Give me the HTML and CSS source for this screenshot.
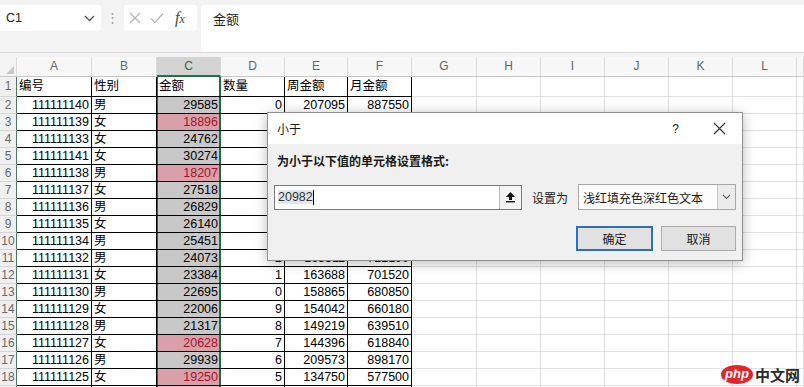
FILE: index.html
```html
<!DOCTYPE html>
<html>
<head>
<meta charset="utf-8">
<link rel="stylesheet" href="styles.css">
</head>
<body>
<div class="top">
  <div class="namebox"><span>C1</span><svg width="11" height="7" viewBox="0 0 11 7"><path d="M1 1l4.5 4.5L10 1" stroke="#555" stroke-width="1.3" fill="none"/></svg></div>
  <div class="dots">⋮</div>
  <div class="fxbox">
    <svg width="12" height="12" viewBox="0 0 12 12"><path d="M1 1l10 10M11 1L1 11" stroke="#b4b4b4" stroke-width="1.2"/></svg>
    <svg width="14" height="12" viewBox="0 0 14 12"><path d="M1 6.5l4 4L13 1.5" stroke="#b4b4b4" stroke-width="1.2" fill="none"/></svg>
    <span class="fx">f<small>x</small></span>
  </div>
  <div class="formula">金额</div>
</div>
<div class="gap"></div>

<div class="sheet">
  <div class="row hd"><b class="corner"></b><b>A</b><b>B</b><b class="ch">C</b><b>D</b><b>E</b><b>F</b><b>G</b><b>H</b><b>I</b><b>J</b><b>K</b><b>L</b><b></b></div>
  <div class="row d first"><b>1</b><span>编号</span><span>性别</span><span class="c">金额</span><span>数量</span><span>周金额</span><span>月金额</span><i></i><i></i><i></i><i></i><i></i><i></i><i></i></div>
  <div class="row d"><b>2</b><span class="n">111111140</span><span>男</span><span class="c n g">29585</span><span class="n">0</span><span class="n">207095</span><span class="n">887550</span><i></i><i></i><i></i><i></i><i></i><i></i><i></i></div>
  <div class="row d"><b>3</b><span class="n">111111139</span><span>女</span><span class="c n p">18896</span><span class="n">0</span><span class="n">132272</span><span class="n">566880</span><i></i><i></i><i></i><i></i><i></i><i></i><i></i></div>
  <div class="row d"><b>4</b><span class="n">111111133</span><span>女</span><span class="c n g">24762</span><span class="n">9</span><span class="n">173334</span><span class="n">742860</span><i></i><i></i><i></i><i></i><i></i><i></i><i></i></div>
  <div class="row d"><b>5</b><span class="n">111111141</span><span>女</span><span class="c n g">30274</span><span class="n">8</span><span class="n">211918</span><span class="n">908220</span><i></i><i></i><i></i><i></i><i></i><i></i><i></i></div>
  <div class="row d"><b>6</b><span class="n">111111138</span><span>男</span><span class="c n p">18207</span><span class="n">7</span><span class="n">127449</span><span class="n">546210</span><i></i><i></i><i></i><i></i><i></i><i></i><i></i></div>
  <div class="row d"><b>7</b><span class="n">111111137</span><span>女</span><span class="c n g">27518</span><span class="n">6</span><span class="n">192626</span><span class="n">825540</span><i></i><i></i><i></i><i></i><i></i><i></i><i></i></div>
  <div class="row d"><b>8</b><span class="n">111111136</span><span>男</span><span class="c n g">26829</span><span class="n">5</span><span class="n">187803</span><span class="n">804870</span><i></i><i></i><i></i><i></i><i></i><i></i><i></i></div>
  <div class="row d"><b>9</b><span class="n">111111135</span><span>女</span><span class="c n g">26140</span><span class="n">4</span><span class="n">182980</span><span class="n">784200</span><i></i><i></i><i></i><i></i><i></i><i></i><i></i></div>
  <div class="row d"><b>10</b><span class="n">111111134</span><span>男</span><span class="c n g">25451</span><span class="n">3</span><span class="n">178157</span><span class="n">763530</span><i></i><i></i><i></i><i></i><i></i><i></i><i></i></div>
  <div class="row d"><b>11</b><span class="n">111111132</span><span>男</span><span class="c n g">24073</span><span class="n">2</span><span class="n">168511</span><span class="n">722190</span><i></i><i></i><i></i><i></i><i></i><i></i><i></i></div>
  <div class="row d"><b>12</b><span class="n">111111131</span><span>女</span><span class="c n g">23384</span><span class="n">1</span><span class="n">163688</span><span class="n">701520</span><i></i><i></i><i></i><i></i><i></i><i></i><i></i></div>
  <div class="row d"><b>13</b><span class="n">111111130</span><span>男</span><span class="c n g">22695</span><span class="n">0</span><span class="n">158865</span><span class="n">680850</span><i></i><i></i><i></i><i></i><i></i><i></i><i></i></div>
  <div class="row d"><b>14</b><span class="n">111111129</span><span>女</span><span class="c n g">22006</span><span class="n">9</span><span class="n">154042</span><span class="n">660180</span><i></i><i></i><i></i><i></i><i></i><i></i><i></i></div>
  <div class="row d"><b>15</b><span class="n">111111128</span><span>男</span><span class="c n g">21317</span><span class="n">8</span><span class="n">149219</span><span class="n">639510</span><i></i><i></i><i></i><i></i><i></i><i></i><i></i></div>
  <div class="row d"><b>16</b><span class="n">111111127</span><span>女</span><span class="c n p">20628</span><span class="n">7</span><span class="n">144396</span><span class="n">618840</span><i></i><i></i><i></i><i></i><i></i><i></i><i></i></div>
  <div class="row d"><b>17</b><span class="n">111111126</span><span>男</span><span class="c n g">29939</span><span class="n">6</span><span class="n">209573</span><span class="n">898170</span><i></i><i></i><i></i><i></i><i></i><i></i><i></i></div>
  <div class="row d"><b>18</b><span class="n">111111125</span><span>女</span><span class="c n p">19250</span><span class="n">5</span><span class="n">134750</span><span class="n">577500</span><i></i><i></i><i></i><i></i><i></i><i></i><i></i></div>
  <div class="row d"><b></b><span></span><span></span><span class="c g"></span><span></span><span></span><span></span><i></i><i></i><i></i><i></i><i></i><i></i><i></i></div>
</div>

<div class="dlg">
  <div class="dlg-title">
    <span class="dlg-name">小于</span>
    <span class="help">?</span>
    <svg class="close" width="13" height="13" viewBox="0 0 13 13"><path d="M1 1l11 11M12 1L1 12" stroke="#333" stroke-width="1.1"/></svg>
  </div>
  <div class="dlg-body">
    <div class="label">为小于以下值的单元格设置格式:</div>
    <div class="inrow">
      <div class="input">
        <div class="field"><span class="selected">20982</span><span class="caret"></span></div>
        <div class="collapse"><svg width="11" height="12" viewBox="0 0 11 12"><path d="M5.5 1L1 6h3v3h3V6h3z" fill="#111"/><rect x="1" y="10" width="9" height="1.4" fill="#111"/></svg></div>
      </div>
      <span class="setas">设置为</span>
      <div class="select"><span>浅红填充色深红色文本</span><div class="drop"><svg width="9" height="6" viewBox="0 0 9 6"><path d="M1 1l3.5 3.5L8 1" stroke="#666" stroke-width="1.1" fill="none"/></svg></div></div>
    </div>
    <div class="btns">
      <button class="btn primary">确定</button>
      <button class="btn">取消</button>
    </div>
  </div>
</div>

<div class="wm"><span class="php">php</span><span class="cn">中文网</span></div>
</body>
</html>
```

FILE: styles.css
```css
html, body {
  margin: 0;
  padding: 0;
  background: #fff;
  overflow: hidden;
  width: 804px;
  height: 387px;
  font-family: "Liberation Sans", "Noto Sans CJK SC", sans-serif;
  color: #000;
}

/* formula bar */
.top {
  display: flex;
  align-items: flex-start;
  height: 53px;
  box-sizing: border-box;
  padding-top: 5px;
  background: #f3f3f3;
  border-bottom: 1px solid #dcdcdc;
}
.namebox {
  width: 101px;
  height: 26px;
  box-sizing: border-box;
  background: #fff;
  border-radius: 0 3px 3px 0;
  display: flex;
  align-items: center;
  justify-content: space-between;
  padding: 0 6px 0 6px;
  font-size: 12.5px;
  color: #222;
}
.dots {
  width: 23px;
  text-align: center;
  line-height: 26px;
  font-size: 13px;
  color: #a0a0a0;
}
.fxbox {
  width: 73px;
  height: 26px;
  box-sizing: border-box;
  background: #fff;
  border-radius: 3px;
  display: flex;
  align-items: center;
  padding-left: 5px;
  gap: 9px;
}
.fx {
  font-family: "Liberation Serif", serif;
  font-style: italic;
  font-size: 16px;
  color: #444;
  margin-left: 2px;
}
.fx small {
  font-size: 12px;
}
.formula {
  flex: 1;
  margin-left: 4px;
  height: 47px;
  box-sizing: border-box;
  background: #fff;
  border-radius: 3px 0 0 3px;
  padding: 4px 12px;
  font-size: 13px;
  color: #222;
}
.gap {
  height: 4px;
  background: #f3f3f3;
}

/* sheet grid */
.row {
  display: grid;
  grid-template-columns: 17px 75px 65px 64px 64px 63px 64px 65px 64px 64px 64px 64px 64px 1fr;
  height: 17px;
  font-size: 12.5px;
}
.row.first, .row.hd {
  height: 20px;
}
.row > * {
  box-sizing: border-box;
  border-right: 1px solid #e1e1e1;
  border-bottom: 1px solid #e1e1e1;
  padding: 0 2px;
  line-height: 16px;
  white-space: nowrap;
  overflow: hidden;
  font-weight: normal;
}
.row.first > * {
  line-height: 19px;
}
.d > span {
  border-color: #000;
}
.n {
  text-align: right;
}
.row > b {
  text-align: center;
  color: #6a6a6a;
  background: #f0f0f0;
  border-right: 1px solid #4f7a61;
  border-bottom-color: #d6d6d6;
  font-size: 12px;
  padding: 0;
}
.row > .c {
  border-right-color: #1e6b41;
  box-shadow: inset 1px 0 0 #1e6b41, inset -1px 0 0 #1e6b41;
}
.g {
  background: #c8c8c8;
}
.p {
  background: #d9a0a9;
  color: #a3142a;
}

/* column headers */
.hd > b {
  background: #f7f7f7;
  border-right: 1px solid #dadada;
  border-bottom: 1px solid #c8c8c8;
  line-height: 19px;
  color: #666;
}
.hd > .corner {
  background: #f3f3f3;
  position: relative;
}
.hd > .corner::after {
  content: "";
  position: absolute;
  right: 2px;
  bottom: 2px;
  border-left: 8px solid transparent;
  border-bottom: 8px solid #c9c9c9;
}
.hd > .ch {
  background: #d4d4d4;
  border-bottom: 2px solid #217346;
  color: #3e5e4b;
}

/* dialog */
.dlg {
  position: absolute;
  left: 267px;
  top: 112px;
  width: 476px;
  height: 149px;
  box-sizing: border-box;
  border: 1px solid #8f8f8f;
  background: #f0f0f0;
  box-shadow: 0 2px 12px rgba(0, 0, 0, 0.28);
  font-family: "Noto Sans CJK SC", "Liberation Sans", sans-serif;
  font-size: 12px;
  color: #1a1a1a;
}
.dlg-title {
  height: 31px;
  background: #fff;
  display: flex;
  align-items: center;
  padding-left: 9px;
}
.dlg-name {
  flex: 1;
  font-size: 12px;
}
.help {
  font-family: "Liberation Sans", sans-serif;
  font-size: 12px;
  margin-right: 34px;
}
.close {
  margin-right: 16px;
}
.dlg-body {
  padding: 0 6px;
}
.label {
  margin-top: 8px;
  margin-left: 3px;
  line-height: 18px;
  font-weight: bold;
}
.inrow {
  display: flex;
  align-items: center;
  margin-top: 14px;
  height: 26px;
}
.input {
  width: 248px;
  height: 25px;
  box-sizing: border-box;
  border: 1px solid #7a7a7a;
  background: #fff;
  display: flex;
}
.field {
  flex: 1;
  display: flex;
  align-items: center;
  padding-left: 3px;
  font-family: "Liberation Sans", sans-serif;
  font-size: 12.5px;
  color: #333;
}
.selected {
  background: #e2e7ee;
}
.caret {
  width: 1px;
  height: 15px;
  background: #000;
}
.collapse {
  width: 21px;
  border-left: 1px solid #b9b9b9;
  background: #f4f4f4;
  display: flex;
  align-items: center;
  justify-content: center;
}
.setas {
  margin-left: 10px;
  width: 46px;
}
.select {
  width: 158px;
  height: 26px;
  box-sizing: border-box;
  border: 1px solid #a8a8a8;
  background: #fdfdfd;
  display: flex;
  align-items: center;
  padding-left: 4px;
}
.select span {
  flex: 1;
}
.drop {
  width: 17px;
  height: 24px;
  border-left: 1px solid #c8c8c8;
  background: #ececec;
  display: flex;
  align-items: center;
  justify-content: center;
}
.btns {
  display: flex;
  justify-content: flex-end;
  gap: 8px;
  margin-top: 16px;
}
.btn {
  width: 75px;
  height: 25px;
  box-sizing: border-box;
  border: 1px solid #adadad;
  background: #e1e1e1;
  font-family: "Noto Sans CJK SC", sans-serif;
  font-size: 12px;
  color: #1a1a1a;
  padding: 0;
}
.btn.primary {
  border: 2px solid #2f6fb3;
  width: 77px;
}

/* watermark */
.wm {
  position: absolute;
  left: 721px;
  top: 365px;
  display: flex;
  align-items: center;
  gap: 2px;
}
.php {
  display: inline-block;
  width: 32px;
  height: 19px;
  border-radius: 50%;
  background: #e1252d;
  color: #fff;
  font-family: "Liberation Sans", sans-serif;
  font-weight: bold;
  font-style: italic;
  font-size: 13px;
  line-height: 18px;
  text-align: center;
}
.cn {
  font-family: "Noto Sans CJK SC", sans-serif;
  font-weight: bold;
  font-size: 15px;
  color: #2a2a2a;
  line-height: 19px;
}
```
